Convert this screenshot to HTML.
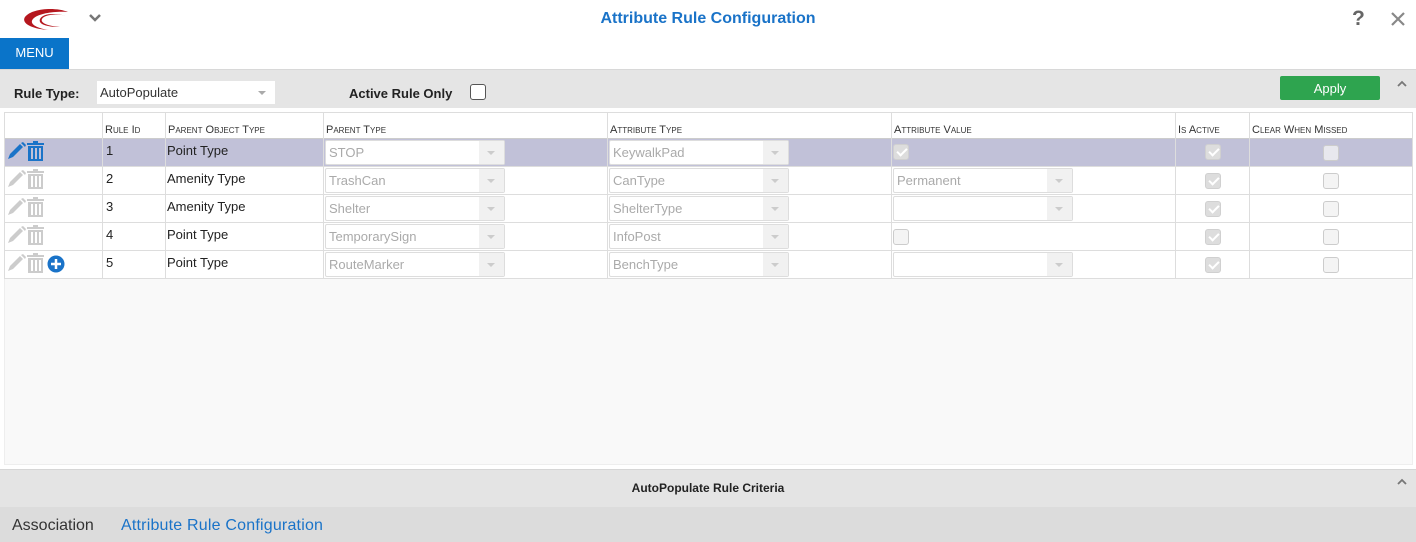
<!DOCTYPE html>
<html><head><meta charset="utf-8"><style>
*{box-sizing:border-box;margin:0;padding:0}
body{width:1416px;height:542px;position:relative;overflow:hidden;background:#fff;font-family:"Liberation Sans",sans-serif;font-size:13px;color:#222}
.a{position:absolute}
.sc{font-variant:small-caps;font-size:11px;color:#333}
.sel{position:absolute;height:25px;border:1px solid #ddd;border-radius:2px;background:#fff;color:#aaa;font-size:13px;line-height:23px;padding-left:3px}
.sel i{position:absolute;right:0;top:0;width:25px;height:23px;background:#f1f1f1}
.sel i:after{content:"";position:absolute;left:8px;top:10px;border:4px solid transparent;border-top:4px solid #ccc}
.cb{position:absolute;width:16px;height:16px;border:1px solid #ccc;border-radius:3px;background:#f4f4f4}
.cb.k{background:#ddd;border-color:#d0d0d0}
.cb.k:after{content:"";position:absolute;left:5px;top:1px;width:4px;height:8px;border:solid #fff;border-width:0 2px 2px 0;transform:rotate(45deg)}
.vl{position:absolute;top:112px;height:166px;width:1px;background:#ddd}
.hl{position:absolute;left:4px;width:1409px;height:1px;background:#ddd}
</style></head><body>
<svg class="a" style="left:22px;top:8px" width="48" height="24" viewBox="0 0 48 24"><path d="M46 4C34 -1 10 0 3 9c-4 6 6 12 24 13C13 20 6 15 12 10 18 5 34 3 46 4z" fill="#b5171e"/><path d="M44 8C34 5 22 7 20 11c-2 4 6 7 18 8-14 0-22-3-20-8 3-6 16-6 26-3z" fill="#b5171e"/></svg>
<svg class="a" style="left:88px;top:13px" width="14" height="10"><path d="M2 2l5 5 5-5" stroke="#777" stroke-width="2.5" fill="none"/></svg>
<div class="a" style="left:0;top:10px;width:1416px;text-align:center;color:#1a73c8;font-weight:bold;font-size:16px">Attribute Rule Configuration</div>
<div class="a" style="left:1352px;top:7px;font-size:21px;font-weight:bold;color:#666">?</div>
<svg class="a" style="left:1391px;top:12px" width="14" height="14"><path d="M1 1l12 12M13 1L1 13" stroke="#888" stroke-width="2.2"/></svg>
<div class="a" style="left:0;top:38px;width:69px;height:32px;background:#0a74c9;color:#fff;font-size:13px;text-align:center;line-height:30px">MENU</div>
<div class="a" style="left:0;top:69px;width:1416px;height:39px;background:#e5e5e5;border-top:1px solid #d8d8d8"></div>
<div class="a" style="left:14px;top:86px;font-weight:bold;font-size:13px">Rule Type:</div>
<div class="a" style="left:97px;top:81px;width:178px;height:23px;background:#fff;padding-left:3px;line-height:23px;color:#333">AutoPopulate<span class="a" style="right:9px;top:10px;border:4px solid transparent;border-top:4px solid #aaa"></span></div>
<div class="a" style="left:349px;top:86px;font-weight:bold">Active Rule Only</div>
<div class="a" style="left:470px;top:84px;width:16px;height:16px;border:1.5px solid #555;border-radius:3px;background:#fff"></div>
<div class="a" style="left:1280px;top:76px;width:100px;height:24px;background:#2ea44f;border-radius:2px;color:#fff;text-align:center;line-height:25px;font-size:13px">Apply</div>
<svg class="a" style="left:1396px;top:80px" width="12" height="8"><path d="M2 6l4-4 4 4" stroke="#777" stroke-width="1.8" fill="none"/></svg>
<div class="a" style="left:4px;top:112px;width:1409px;height:353px;background:#f9f9f9;border:1px solid #eee"></div>
<div class="a" style="left:4px;top:112px;width:1409px;height:26px;background:#fff"></div>
<div class="a" style="left:4px;top:138px;width:1409px;height:140px;background:#fff"></div>
<div class="a" style="left:4px;top:138px;width:1409px;height:28px;background:#c1c1d8"></div>
<div class="hl" style="top:112px"></div><div class="hl" style="top:138px;background:#ccc"></div><div class="hl" style="top:166px"></div><div class="hl" style="top:194px"></div><div class="hl" style="top:222px"></div><div class="hl" style="top:250px"></div><div class="hl" style="top:278px"></div>
<div class="vl" style="left:4px"></div><div class="vl" style="left:102px"></div><div class="vl" style="left:165px"></div><div class="vl" style="left:323px"></div><div class="vl" style="left:607px"></div><div class="vl" style="left:891px"></div><div class="vl" style="left:1175px"></div><div class="vl" style="left:1249px"></div><div class="vl" style="left:1412px"></div>
<div class="a sc" style="left:105px;top:124px">Rule Id</div>
<div class="a sc" style="left:168px;top:124px">Parent Object Type</div>
<div class="a sc" style="left:326px;top:124px">Parent Type</div>
<div class="a sc" style="left:610px;top:124px">Attribute Type</div>
<div class="a sc" style="left:894px;top:124px">Attribute Value</div>
<div class="a sc" style="left:1178px;top:124px">Is Active</div>
<div class="a sc" style="left:1252px;top:124px">Clear When Missed</div>
<svg class="a" style="left:6px;top:141px" width="42" height="140" viewBox="0 0 42 140">
<g fill="#1a73c8"><path d="M2 18l2-5 10-10 3 3-10 10z"/><path d="M15 2l2-1 3 3-1 2z"/><rect x="21" y="2" width="17" height="2"/><rect x="27" y="0" width="5" height="2"/><path d="M22 5h15v15h-15zM25 7v11h2V7zM29 7v11h2V7zM33 7v11h2V7z" fill-rule="evenodd"/></g>
<g fill="#ccc" transform="translate(0,28)"><path d="M2 18l2-5 10-10 3 3-10 10z"/><path d="M15 2l2-1 3 3-1 2z"/><rect x="21" y="2" width="17" height="2"/><rect x="27" y="0" width="5" height="2"/><path d="M22 5h15v15h-15zM25 7v11h2V7zM29 7v11h2V7zM33 7v11h2V7z" fill-rule="evenodd"/></g>
<g fill="#ccc" transform="translate(0,56)"><path d="M2 18l2-5 10-10 3 3-10 10z"/><path d="M15 2l2-1 3 3-1 2z"/><rect x="21" y="2" width="17" height="2"/><rect x="27" y="0" width="5" height="2"/><path d="M22 5h15v15h-15zM25 7v11h2V7zM29 7v11h2V7zM33 7v11h2V7z" fill-rule="evenodd"/></g>
<g fill="#ccc" transform="translate(0,84)"><path d="M2 18l2-5 10-10 3 3-10 10z"/><path d="M15 2l2-1 3 3-1 2z"/><rect x="21" y="2" width="17" height="2"/><rect x="27" y="0" width="5" height="2"/><path d="M22 5h15v15h-15zM25 7v11h2V7zM29 7v11h2V7zM33 7v11h2V7z" fill-rule="evenodd"/></g>
<g fill="#ccc" transform="translate(0,112)"><path d="M2 18l2-5 10-10 3 3-10 10z"/><path d="M15 2l2-1 3 3-1 2z"/><rect x="21" y="2" width="17" height="2"/><rect x="27" y="0" width="5" height="2"/><path d="M22 5h15v15h-15zM25 7v11h2V7zM29 7v11h2V7zM33 7v11h2V7z" fill-rule="evenodd"/></g>
</svg>
<svg class="a" style="left:47px;top:255px" width="18" height="18"><circle cx="9" cy="9" r="8.5" fill="#1a73c8"/><path d="M9 4v10M4 9h10" stroke="#fff" stroke-width="2.5"/></svg>
<div class="a" style="left:106px;top:143px">1</div><div class="a" style="left:167px;top:143px">Point Type</div>
<div class="a" style="left:106px;top:171px">2</div><div class="a" style="left:167px;top:171px">Amenity Type</div>
<div class="a" style="left:106px;top:199px">3</div><div class="a" style="left:167px;top:199px">Amenity Type</div>
<div class="a" style="left:106px;top:227px">4</div><div class="a" style="left:167px;top:227px">Point Type</div>
<div class="a" style="left:106px;top:255px">5</div><div class="a" style="left:167px;top:255px">Point Type</div>
<div class="sel" style="left:325px;top:140px;width:180px">STOP<i></i></div>
<div class="sel" style="left:325px;top:168px;width:180px">TrashCan<i></i></div>
<div class="sel" style="left:325px;top:196px;width:180px">Shelter<i></i></div>
<div class="sel" style="left:325px;top:224px;width:180px">TemporarySign<i></i></div>
<div class="sel" style="left:325px;top:252px;width:180px">RouteMarker<i></i></div>
<div class="sel" style="left:609px;top:140px;width:180px">KeywalkPad<i></i></div>
<div class="sel" style="left:609px;top:168px;width:180px">CanType<i></i></div>
<div class="sel" style="left:609px;top:196px;width:180px">ShelterType<i></i></div>
<div class="sel" style="left:609px;top:224px;width:180px">InfoPost<i></i></div>
<div class="sel" style="left:609px;top:252px;width:180px">BenchType<i></i></div>
<div class="cb k" style="left:893px;top:144px"></div>
<div class="sel" style="left:893px;top:168px;width:180px">Permanent<i></i></div>
<div class="sel" style="left:893px;top:196px;width:180px"><i></i></div>
<div class="cb" style="left:893px;top:229px"></div>
<div class="sel" style="left:893px;top:252px;width:180px"><i></i></div>
<div class="cb k" style="left:1205px;top:144px"></div><div class="cb k" style="left:1205px;top:173px"></div><div class="cb k" style="left:1205px;top:201px"></div><div class="cb k" style="left:1205px;top:229px"></div><div class="cb k" style="left:1205px;top:257px"></div>
<div class="cb" style="left:1323px;top:145px;background:#e8e8ee"></div><div class="cb" style="left:1323px;top:173px"></div><div class="cb" style="left:1323px;top:201px"></div><div class="cb" style="left:1323px;top:229px"></div><div class="cb" style="left:1323px;top:257px"></div>
<div class="a" style="left:0;top:469px;width:1416px;height:38px;background:#e4e4e4;border-top:1px solid #d6d6d6"></div>
<div class="a" style="left:0;top:481px;width:1416px;text-align:center;font-weight:bold;font-size:12px">AutoPopulate Rule Criteria</div>
<svg class="a" style="left:1396px;top:478px" width="12" height="8"><path d="M2 6l4-4 4 4" stroke="#777" stroke-width="1.8" fill="none"/></svg>
<div class="a" style="left:0;top:507px;width:1416px;height:35px;background:#dcdcdc"></div>
<div class="a" style="left:12px;top:517px;font-size:16px;color:#333">Association</div>
<div class="a" style="left:121px;top:517px;font-size:16px;color:#1a73c8;letter-spacing:0.2px">Attribute Rule Configuration</div>
</body></html>
